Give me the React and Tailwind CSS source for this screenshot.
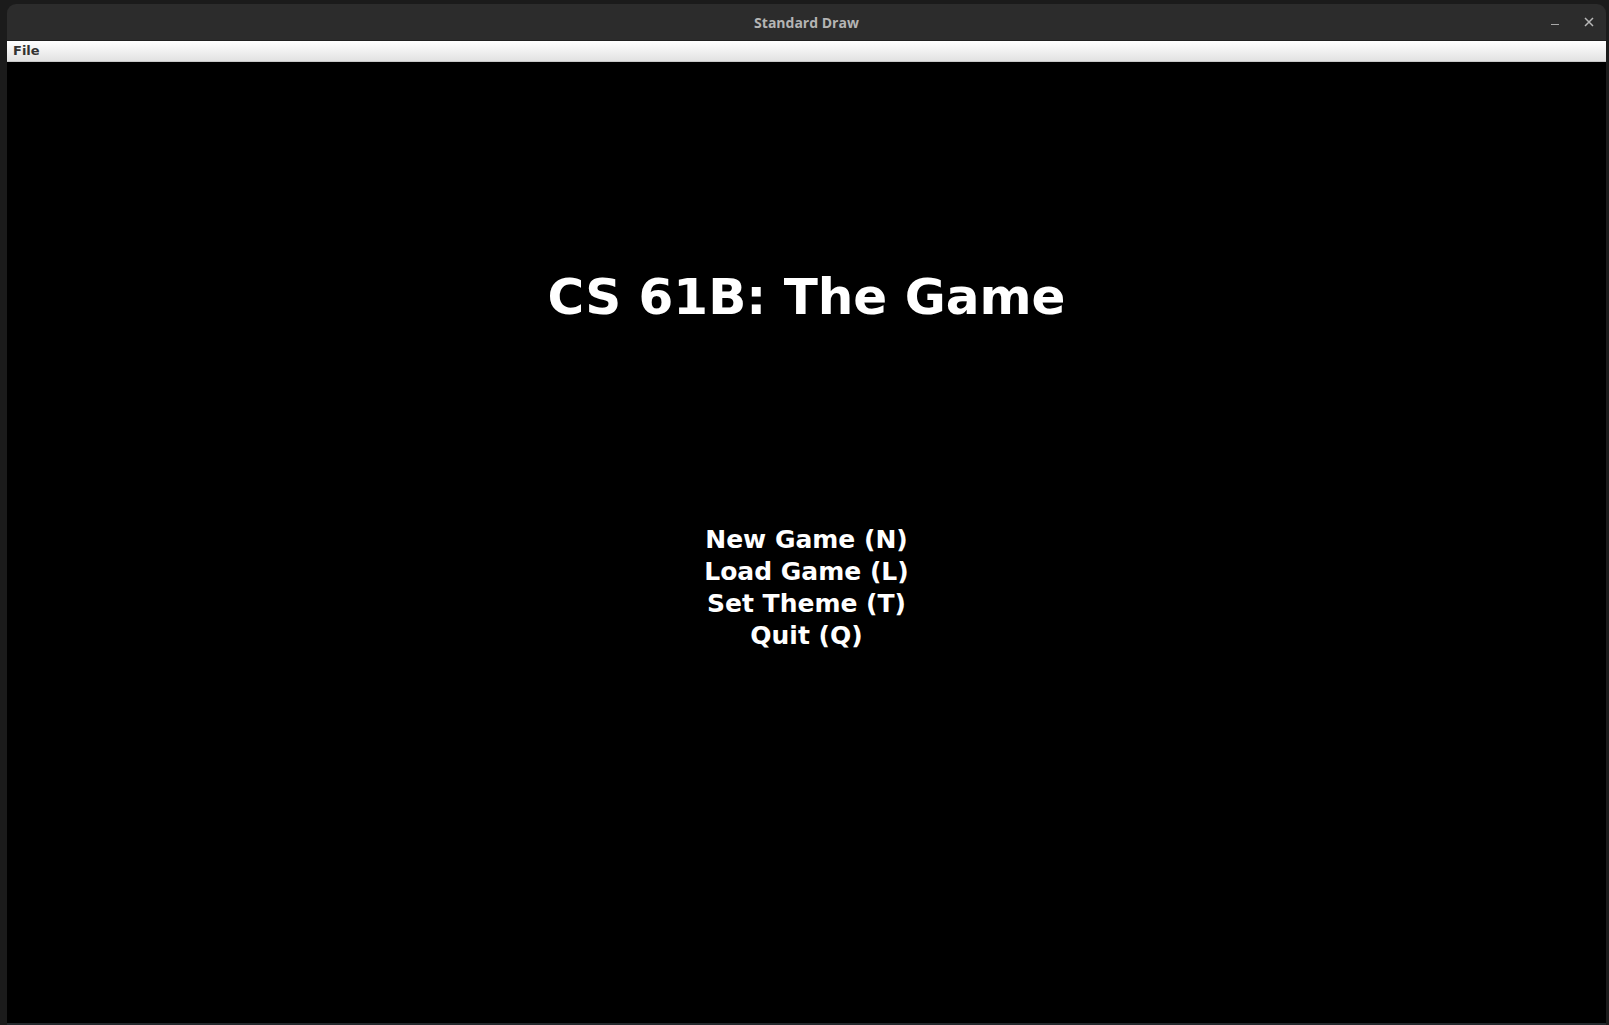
import React from 'react';

const menuItems = ['New Game (N)', 'Load Game (L)', 'Set Theme (T)', 'Quit (Q)'];

const App = () => {
  return (
    <div className="w-[1609px] h-[1025px] bg-[#1b1b1b] pt-[4px] pl-[7px] pr-[3px] flex flex-col overflow-hidden">
      <div className="flex-1 flex flex-col">
        {/* Title bar */}
        <div className="relative h-[37px] bg-[#2c2c2c] rounded-t-[9px] flex items-center justify-center border-b border-[#1f1f1f]">
          <span className="text-[14px] font-bold text-[#b4b4b4]" style={{ fontFamily: '"Open Sans", "DejaVu Sans", sans-serif' }}>
            Standard Draw
          </span>
          <div className="absolute right-[0px] top-0 h-full flex items-center">
            <div className="w-[34px] flex justify-center">
              <div className="w-[8px] h-[1px] bg-[#a8a8a8] mt-[5px]" />
            </div>
            <div className="w-[34px] flex justify-center">
              <svg width="10" height="10" viewBox="0 0 10 10">
                <path d="M1 1 L9 9 M9 1 L1 9" stroke="#b8b8b8" strokeWidth="1.5" />
              </svg>
            </div>
          </div>
        </div>

        {/* Menu bar */}
        <div className="h-[21px] bg-gradient-to-b from-[#ffffff] to-[#e2e2e2] border-b border-[#c8c8c8] flex items-center px-[6px]">
          <span className="text-[13px] font-bold text-[#333333]" style={{ fontFamily: '"DejaVu Sans", sans-serif' }}>
            File
          </span>
        </div>

        {/* Canvas */}
        <div className="flex-1 bg-black flex flex-col items-center text-white" style={{ fontFamily: '"DejaVu Sans", sans-serif' }}>
          <div className="mt-[206px] text-[50px] leading-[58px] font-bold">CS 61B: The Game</div>
          <div className="mt-[198px] flex flex-col items-center">
            {menuItems.map((item) => (
              <div key={item} className="text-[25px] leading-[32px] font-bold">
                {item}
              </div>
            ))}
          </div>
        </div>

        {/* Peeking IDE bar */}
        <div className="h-[2px] bg-[#23282c]" />
      </div>
    </div>
  );
};

export default App;
